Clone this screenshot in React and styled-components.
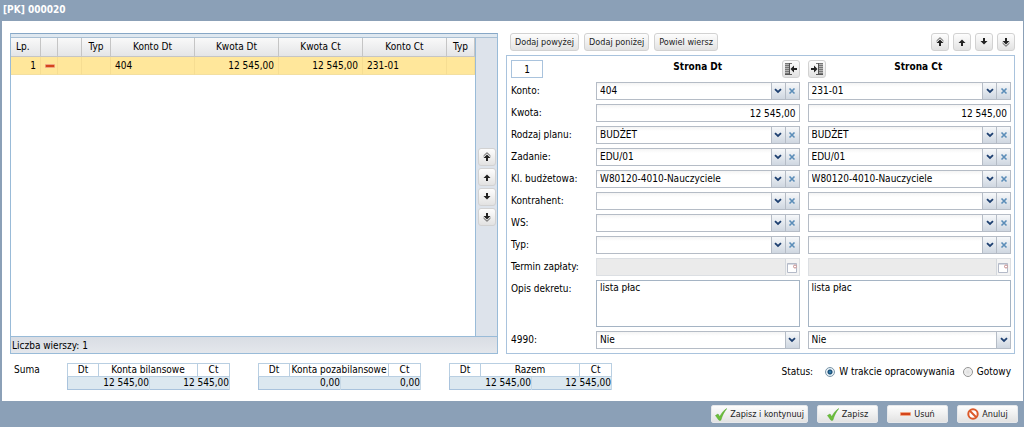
import React, {useState} from 'react';
import styled, {createGlobalStyle} from 'styled-components';

const GlobalStyle = createGlobalStyle`
  * {
    box-sizing: border-box;
  }

  body {
    margin: 0;
    background: #8ba0b7;
    color: #000;
  }

  body,
  button,
  input,
  select,
  textarea {
    font-family: 'DejaVu Sans Condensed', 'DejaVu Sans', Tahoma, sans-serif;
    font-size: 10px;
    line-height: 14px;
  }
`;

const Window = styled.div`
  display: flex;
  flex-direction: column;
  min-height: 100vh;
`;

const TitleBar = styled.h1`
  margin: 0;
  padding: 3px 3px 4px;
  font-size: 10px;
  line-height: 14px;
  color: #fff;
`;

const Content = styled.main`
  flex: 1;
  margin: 0 1px 0 2px;
  padding: 12px 8px 11px;
  background: #fff;
`;

const Columns = styled.div`
  display: grid;
  grid-template-columns: 488fr 509fr;
  gap: 8px;
`;

const ListPanel = styled.section`
  min-width: 0;
  display: flex;
  flex-direction: column;
  border: 1px solid #99bbd8;
  border-top: 1px solid #87a7c6;
`;

const ListTop = styled.div`
  height: 4px;
  background: #dfe8f0;
  border-bottom: 1px solid #a9bfd3;
`;

const ListBody = styled.div`
  flex: 1;
  display: flex;
`;

const TableArea = styled.div`
  flex: 1;
  min-width: 0;
`;

const EntryTable = styled.table`
  width: 100%;
  table-layout: fixed;
  border-collapse: separate;
  border-spacing: 0;

  th {
    height: 19px;
    padding: 0 5px;
    font-weight: normal;
    background: linear-gradient(#f9f9f9, #e4e5e7);
    border-right: 1px solid #c5c5c5;
    border-bottom: 1px solid #c5c5c5;
  }

  td {
    height: 18px;
    padding: 0 4px;
    background: #ffe79b;
    border-right: 1px solid #f6dd92;
    border-bottom: 1px solid #f3dfa0;
  }
`;

const Th = styled.th`
  text-align: ${({$align}) => $align || 'center'};
`;

const Td = styled.td`
  text-align: ${({$align}) => $align || 'left'};

  svg {
    display: block;
  }
`;

const SideStrip = styled.div`
  width: 22px;
  display: flex;
  flex-direction: column;
  align-items: center;
  justify-content: center;
  gap: 2px;
  background: #dde3eb;
  border-left: 1px solid #99bbd8;
`;

const StatusBar = styled.div`
  padding: 2px 1px 0;
  height: 17px;
  background: linear-gradient(#d9dde4, #e4e7ec);
  border-top: 1px solid #99bbd8;
`;

const Button = styled.button`
  display: inline-flex;
  align-items: center;
  justify-content: center;
  gap: 3px;
  height: 18px;
  padding: 0 4px;
  font-size: 9px;
  color: #222;
  white-space: nowrap;
  cursor: pointer;
  background: linear-gradient(#fdfdfd, #f0f0f0 50%, #e2e2e2);
  border: 1px solid #d2d2d2;
  border-radius: 3px;
`;

const IconButton = styled(Button)`
  flex: none;
  width: 18px;
  padding: 0;
`;

const EditPanel = styled.section`
  min-width: 0;
`;

const Toolbar = styled.div`
  display: flex;
  gap: 5px;
  margin: 0 0 4px 4px;
`;

const ArrowGroup = styled.div`
  display: flex;
  gap: 4px;
  margin-left: auto;
`;

const Form = styled.div`
  display: grid;
  grid-template-columns: 77px 1fr 1fr;
  grid-auto-rows: minmax(18px, auto);
  gap: 4px 8px;
  padding: 4px 3px 4px 4px;
  border: 1px solid #a9c3dd;
`;

const RowLabel = styled.label`
  padding-top: 2px;
  white-space: nowrap;
`;

const SideHead = styled.div`
  display: flex;
  padding-left: ${({$offset}) => $offset || '0'};

  h2 {
    flex: 1;
    margin: 0;
    font-size: 10px;
    line-height: 13px;
    text-align: center;
  }
`;

const TextInput = styled.input`
  width: 100%;
  height: 18px;
  padding: 0 3px;
  text-align: ${({$align}) => $align || 'left'};
  color: #000;
  background: linear-gradient(#f4f4f4, #fff 4px);
  border: 1px solid #b5bcc6;
  border-radius: 0;
`;

const NumberInput = styled(TextInput)`
  width: 32px;
  background: #fff;
  border-color: #a9c3dd;
`;

const TextArea = styled.textarea`
  display: block;
  width: 100%;
  height: 47px;
  padding: 0 3px;
  resize: none;
  color: #000;
  background: #fff;
  border: 1px solid #a5b4c4;
`;

const ComboBox = styled.div`
  display: flex;
  height: 18px;
`;

const SelectWrap = styled.div`
  position: relative;
  flex: 1;
  min-width: 0;

  select {
    appearance: none;
    width: 100%;
    height: 18px;
    padding: 0 16px 0 3px;
    color: #000;
    background: linear-gradient(#f4f4f4, #fff 4px);
    border: 1px solid #b5bcc6;
    border-radius: 0;
  }
`;

const Arrow = styled.span`
  position: absolute;
  top: 1px;
  right: 1px;
  display: flex;
  align-items: center;
  justify-content: center;
  width: 14px;
  height: 16px;
  pointer-events: none;
  background: linear-gradient(#f6f8fa, #cfd7e1);
  border-left: 1px solid #b5bcc6;
`;

const ClearButton = styled.button`
  display: flex;
  align-items: center;
  justify-content: center;
  width: 14px;
  padding: 0;
  cursor: pointer;
  background: linear-gradient(#f6f8fa, #cfd7e1);
  border: 1px solid #b5bcc6;
  border-left: 0;
`;

const DateField = styled.div`
  display: flex;
  height: 18px;
  background: #ebebeb;
  border: 1px solid #dcdfe3;

  input {
    flex: 1;
    min-width: 0;
    padding: 0 3px;
    background: none;
    border: 0;
  }

  button {
    display: flex;
    align-items: center;
    justify-content: center;
    width: 14px;
    padding: 0;
    background: #f3f3f3;
    border: 0;
    border-left: 1px solid #d4d8dd;
  }
`;

const Summary = styled.div`
  display: flex;
  align-items: flex-start;
  gap: 28px;
  margin-top: 9px;
`;

const SummaryLabel = styled.span`
  width: 29px;
  padding-left: 4px;
  white-space: nowrap;
`;

const SumTable = styled.table`
  width: 162px;
  table-layout: fixed;
  border-collapse: collapse;
  line-height: 12px;
  border: 1px solid #a9c3dd;

  th,
  td {
    height: 12px;
    padding: 0;
    white-space: nowrap;
  }

  th {
    font-weight: normal;
    border: 1px solid #b9cfe2;
  }

  td {
    text-align: right;
    background: #dce8f0;
    border-right: 1px solid #c6d8e6;
  }
`;

const Status = styled.div`
  display: flex;
  align-items: center;
  gap: 8px;
  margin-left: auto;
  padding: 2px 4px 0 0;
  white-space: nowrap;

  label {
    display: flex;
    align-items: center;
    gap: 4px;
  }

  > span {
    margin-right: 4px;
  }
`;

const Radio = styled.input`
  appearance: none;
  width: 10px;
  height: 10px;
  margin: 0;
  background: radial-gradient(#dedede, #fafafa);
  border: 1px solid #949494;
  border-radius: 50%;

  &:checked {
    background: radial-gradient(circle, #4a9bcb 0, #10436c 2px, #e6f0f6 3px);
    border-color: #7a95a8;
  }
`;

const Footer = styled.footer`
  display: flex;
  justify-content: flex-end;
  gap: 9px;
  padding: 4px 6px 4px;
`;

const FooterButton = styled(Button)`
  min-width: 61px;
  padding: 0 3px;
  border-color: #e6e8eb;
  border-radius: 2px;
`;

const columns = [
  {label: 'Lp.', width: 30, align: 'left'},
  {label: '', width: 17},
  {label: '', width: 24},
  {label: 'Typ', width: 29},
  {label: 'Konto Dt', width: 84},
  {label: 'Kwota Dt', width: 84},
  {label: 'Kwota Ct', width: 84},
  {label: 'Konto Ct', width: 84},
  {label: 'Typ', width: 28},
];

const comboRows = [
  {id: 'plan', label: 'Rodzaj planu:', value: 'BUDŻET'},
  {id: 'zadanie', label: 'Zadanie:', value: 'EDU/01'},
  {id: 'klasyfikacja', label: 'Kl. budżetowa:', value: 'W80120-4010-Nauczyciele'},
  {id: 'kontrahent', label: 'Kontrahent:', value: ''},
  {id: 'ws', label: 'WS:', value: ''},
  {id: 'typ', label: 'Typ:', value: ''},
];

const sums = [
  {name: 'Konta bilansowe', dt: '12 545,00', ct: '12 545,00'},
  {name: 'Konta pozabilansowe', dt: '0,00', ct: '0,00'},
  {name: 'Razem', dt: '12 545,00', ct: '12 545,00'},
];

const moves = [
  {label: 'Na początek', down: false, double: true},
  {label: 'W górę', down: false, double: false},
  {label: 'W dół', down: true, double: false},
  {label: 'Na koniec', down: true, double: true},
];

const MoveIcon = ({down, double}) => (
  <svg width='10' height='10' viewBox='0 0 10 10'>
    <g transform={down ? 'rotate(180 5 5)' : undefined}>
      <path d='M5 2.5L8.5 6H6v3H4V6H1.500z' fill='#222' />
      {double && (
        <path d='M1.5 4L5 .7 8.5 4' fill='none' stroke='#555' strokeWidth='1' />
      )}
    </g>
  </svg>
);

const CopyIcon = ({right}) => (
  <svg width='14' height='14' viewBox='0 0 14 14'>
    <g transform={right ? 'translate(14 0) scale(-1 1)' : undefined}>
      <path d='M1 2h4v10H1z' fill='#b4b4b4' />
      <path
        d='M1 1.500h7M1 3.500h4M1 5.500h4M1 7.500h4M1 9.500h4M1 11.500h4'
        stroke='#777'
      />
      <path d='M5.500 1v12M1 12.500h7' stroke='#555' />
      <path d='M6.500 7L10 3.500V6h3v2h-3v2.500z' fill='#222' />
    </g>
  </svg>
);

const ChevronIcon = () => (
  <svg width='8' height='6' viewBox='0 0 8 6'>
    <path d='M1 1.200L4 4l3-2.800' fill='none' stroke='#1d3f70' strokeWidth='1.800' />
  </svg>
);

const CrossIcon = () => (
  <svg width='8' height='8' viewBox='0 0 8 8'>
    <path d='M1.500 1.500l5 5M6.500 1.500l-5 5' stroke='#5b8db8' strokeWidth='1.600' />
  </svg>
);

const CalendarIcon = () => (
  <svg width='11' height='11' viewBox='0 0 11 11'>
    <path d='M.5 1.500h9v9h-9z' fill='#fff' stroke='#b4bac8' />
    <path d='M.5 2h9' stroke='#b4bac8' />
    <circle cx='8' cy='4.500' r='1.500' fill='#fff' stroke='#c98f8f' />
  </svg>
);

const MinusIcon = ({width = 11}) => (
  <svg width={width} height='4' viewBox='0 0 12 4' preserveAspectRatio='none'>
    <rect width='12' height='4' rx='1' fill='#f0a583' />
    <rect x='1' y='1' width='10' height='2' fill='#d4451b' />
  </svg>
);

const CheckIcon = () => (
  <svg width='12' height='13' viewBox='0 0 12 13'>
    <path
      d='M.5 7.500L3 6l1.800 2.800C6.300 5.500 8.500 2.500 11.800.5 9 4 7.200 7.500 5.800 12.300H4z'
      fill='#6cbf3a'
      stroke='#4fa228'
      strokeWidth='.5'
    />
  </svg>
);

const CancelIcon = () => (
  <svg width='12' height='12' viewBox='0 0 12 12'>
    <circle cx='6' cy='6' r='4.700' fill='#fff' stroke='#dc5a2b' strokeWidth='2' />
    <path d='M2.800 2.800l6.400 6.400' stroke='#dc5a2b' strokeWidth='2' />
  </svg>
);

const MoveButtons = () =>
  moves.map(({label, down, double}) => (
    <IconButton type='button' key={label} aria-label={label}>
      <MoveIcon down={down} double={double} />
    </IconButton>
  ));

const Dropdown = ({id, label, value, onChange, options}) => (
  <SelectWrap>
    <select id={id} aria-label={label} value={value} onChange={onChange}>
      {options.map(option => (
        <option key={option} value={option}>
          {option}
        </option>
      ))}
    </select>
    <Arrow>
      <ChevronIcon />
    </Arrow>
  </SelectWrap>
);

const Combo = ({id, label, initial}) => {
  const [value, setValue] = useState(initial);
  const options = initial ? ['', initial] : [''];

  return (
    <ComboBox>
      <Dropdown
        id={id}
        label={label}
        value={value}
        options={options}
        onChange={e => setValue(e.target.value)}
      />
      <ClearButton type='button' aria-label='Wyczyść' onClick={() => setValue('')}>
        <CrossIcon />
      </ClearButton>
    </ComboBox>
  );
};

const ComboRow = ({id, label, dt, ct}) => (
  <>
    <RowLabel htmlFor={`${id}-dt`}>{label}</RowLabel>
    <Combo id={`${id}-dt`} label={`${label} Dt`} initial={dt} />
    <Combo id={`${id}-ct`} label={`${label} Ct`} initial={ct} />
  </>
);

const DisabledDate = ({id, label}) => (
  <DateField>
    <input id={id} aria-label={label} type='text' disabled />
    <button type='button' aria-label='Kalendarz' disabled>
      <CalendarIcon />
    </button>
  </DateField>
);

const YesNo = ({id, label}) => {
  const [value, setValue] = useState('Nie');

  return (
    <Dropdown
      id={id}
      label={label}
      value={value}
      options={['Nie', 'Tak']}
      onChange={e => setValue(e.target.value)}
    />
  );
};

const EntryList = () => (
  <ListPanel>
    <ListTop />
    <ListBody>
      <TableArea>
        <EntryTable>
          <colgroup>
            {columns.map(({width}, i) => (
              <col key={i} width={width} />
            ))}
          </colgroup>
          <thead>
            <tr>
              {columns.map(({label, align}, i) => (
                <Th key={i} $align={align}>
                  {label}
                </Th>
              ))}
            </tr>
          </thead>
          <tbody>
            <tr>
              <Td $align='right'>1</Td>
              <Td>
                <MinusIcon width={10} />
              </Td>
              <Td />
              <Td />
              <Td>404</Td>
              <Td $align='right'>12 545,00</Td>
              <Td $align='right'>12 545,00</Td>
              <Td>231-01</Td>
              <Td />
            </tr>
          </tbody>
        </EntryTable>
      </TableArea>
      <SideStrip>
        <MoveButtons />
      </SideStrip>
    </ListBody>
    <StatusBar>Liczba wierszy: 1</StatusBar>
  </ListPanel>
);

const EntryForm = () => (
  <EditPanel>
    <Toolbar>
      <Button type='button'>Dodaj powyżej</Button>
      <Button type='button'>Dodaj poniżej</Button>
      <Button type='button'>Powiel wiersz</Button>
      <ArrowGroup>
        <MoveButtons />
      </ArrowGroup>
    </Toolbar>
    <Form>
      <NumberInput aria-label='Lp.' defaultValue='1' $align='center' />
      <SideHead $offset='18px'>
        <h2>Strona Dt</h2>
        <IconButton type='button' aria-label='Kopiuj do Dt'>
          <CopyIcon />
        </IconButton>
      </SideHead>
      <SideHead>
        <IconButton type='button' aria-label='Kopiuj do Ct'>
          <CopyIcon right />
        </IconButton>
        <h2>Strona Ct</h2>
      </SideHead>

      <ComboRow id='konto' label='Konto:' dt='404' ct='231-01' />

      <RowLabel htmlFor='kwota-dt'>Kwota:</RowLabel>
      <TextInput id='kwota-dt' defaultValue='12 545,00' $align='right' />
      <TextInput aria-label='Kwota Ct' defaultValue='12 545,00' $align='right' />

      {comboRows.map(({id, label, value}) => (
        <ComboRow key={id} id={id} label={label} dt={value} ct={value} />
      ))}

      <RowLabel htmlFor='termin-dt'>Termin zapłaty:</RowLabel>
      <DisabledDate id='termin-dt' label='Termin zapłaty Dt' />
      <DisabledDate id='termin-ct' label='Termin zapłaty Ct' />

      <RowLabel htmlFor='opis-dt'>Opis dekretu:</RowLabel>
      <TextArea id='opis-dt' defaultValue='lista płac' />
      <TextArea aria-label='Opis dekretu Ct' defaultValue='lista płac' />

      <RowLabel htmlFor='p4990-dt'>4990:</RowLabel>
      <YesNo id='p4990-dt' label='4990 Dt' />
      <YesNo id='p4990-ct' label='4990 Ct' />
    </Form>
  </EditPanel>
);

const SumBox = ({name, dt, ct}) => (
  <SumTable>
    <colgroup>
      <col width='31' />
      <col width='51' />
      <col width='48' />
      <col width='32' />
    </colgroup>
    <thead>
      <tr>
        <th>Dt</th>
        <th colSpan='2'>{name}</th>
        <th>Ct</th>
      </tr>
    </thead>
    <tbody>
      <tr>
        <td colSpan='2'>{dt}</td>
        <td colSpan='2'>{ct}</td>
      </tr>
    </tbody>
  </SumTable>
);

const App = () => {
  const [status, setStatus] = useState('open');

  return (
    <>
      <GlobalStyle />
      <Window>
        <TitleBar>[PK] 000020</TitleBar>
        <Content>
          <Columns>
            <EntryList />
            <EntryForm />
          </Columns>
          <Summary>
            <SummaryLabel>Suma</SummaryLabel>
            {sums.map(sum => (
              <SumBox key={sum.name} {...sum} />
            ))}
            <Status>
              <span>Status:</span>
              <label>
                <Radio
                  type='radio'
                  name='status'
                  checked={status === 'open'}
                  onChange={() => setStatus('open')}
                />
                W trakcie opracowywania
              </label>
              <label>
                <Radio
                  type='radio'
                  name='status'
                  checked={status === 'done'}
                  onChange={() => setStatus('done')}
                />
                Gotowy
              </label>
            </Status>
          </Summary>
        </Content>
        <Footer>
          <FooterButton type='button'>
            <CheckIcon />
            Zapisz i kontynuuj
          </FooterButton>
          <FooterButton type='button'>
            <CheckIcon />
            Zapisz
          </FooterButton>
          <FooterButton type='button'>
            <MinusIcon />
            Usuń
          </FooterButton>
          <FooterButton type='button'>
            <CancelIcon />
            Anuluj
          </FooterButton>
        </Footer>
      </Window>
    </>
  );
};

export default App;
